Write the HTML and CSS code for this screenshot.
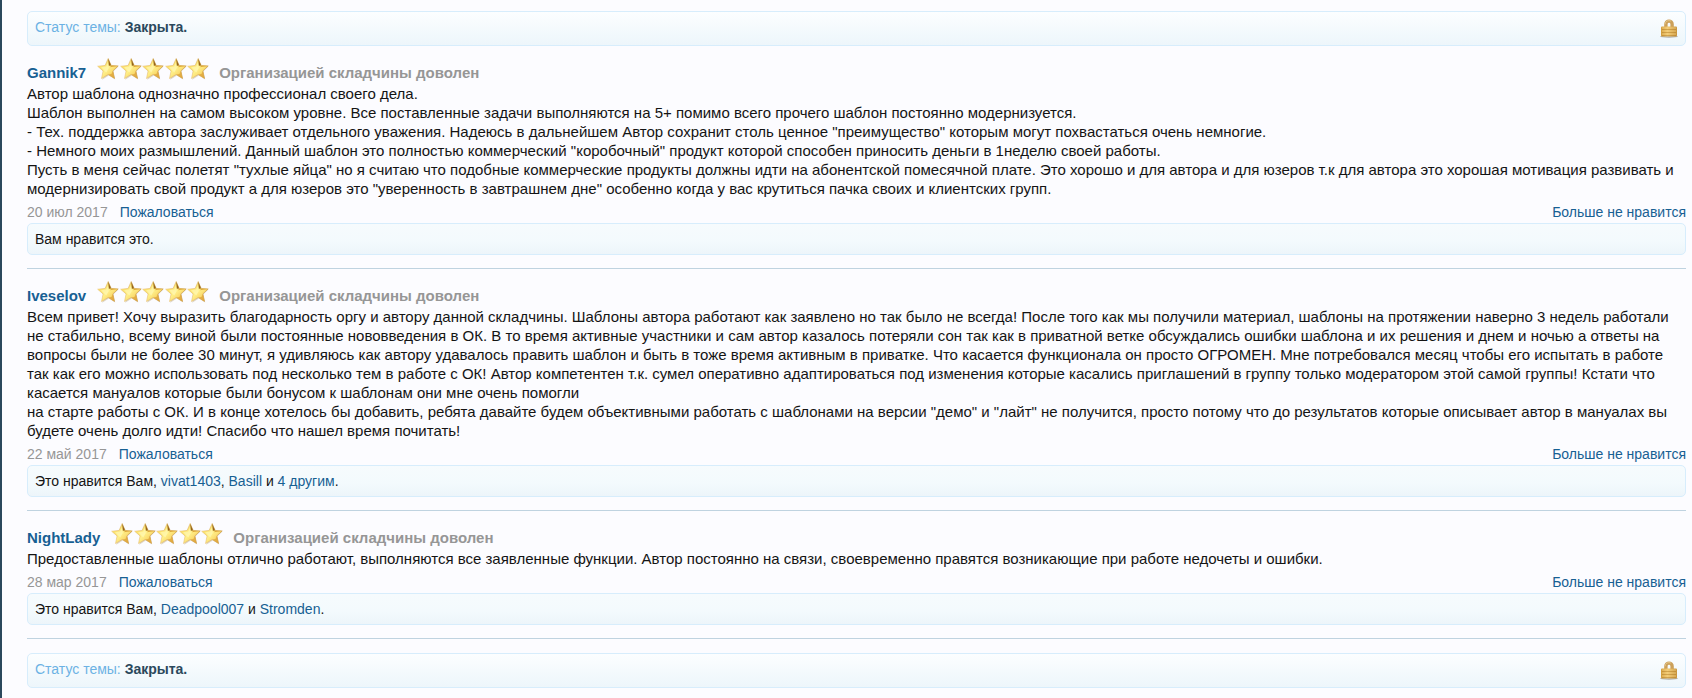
FILE: index.html
```
<!DOCTYPE html>
<html lang="ru">
<head>
<meta charset="utf-8">
<title>Отзывы</title>
<link rel="stylesheet" href="styles.css">
</head>
<body>
<svg class="defs" aria-hidden="true">
  <defs>
    <linearGradient id="gold" x1="0" y1="0" x2="1" y2="1">
      <stop offset="0" stop-color="#f8cf45"/>
      <stop offset="0.5" stop-color="#fff08a"/>
      <stop offset="1" stop-color="#f3b840"/>
    </linearGradient>
    <linearGradient id="edge" x1="0" y1="0" x2="1" y2="0">
      <stop offset="0" stop-color="#f0cb84"/>
      <stop offset="1" stop-color="#c4923f"/>
    </linearGradient>
    <linearGradient id="brass" x1="0" y1="0" x2="1" y2="0">
      <stop offset="0" stop-color="#d19b3a"/>
      <stop offset="0.4" stop-color="#f0c871"/>
      <stop offset="1" stop-color="#c8943c"/>
    </linearGradient>
    <g id="star">
      <path d="M11.5 1l3.2 6.7 6.8.9-5.2 4.9 1.9 7.9-6.4-3.9-6.6 4.2 1.6-7.8L1.2 8.8l7.1-.9z" fill="#b09a74" opacity=".4"/>
      <path d="M11.2 .5l2.9 6.9 7.1.5-5.3 5 1.6 7.5-6.3-3.9-6.7 4 1.6-7.6L.6 8.2l7.5-.8z" fill="url(#gold)" stroke="url(#edge)" stroke-width=".6" stroke-linejoin="round"/>
      <path d="M11.2 .5l2.9 6.9-2.3.4z" fill="#96641c"/>
      <path d="M21.2 7.9l-7.1-.5-1 1.8z" fill="#dfaa3c"/>
      <path d="M15.9 12.9l1.6 7.5-6.3-3.9 3.2-.6z" fill="#dba03a" opacity=".75"/>
      <path d="M4 9.3l5.2-.8L11 4.6l.8 5.4-2.5 4.5z" fill="#fff9b8" opacity=".65"/>
    </g>
    <symbol id="stars" viewBox="0 0 113 22">
      <use href="#star" x="1"/><use href="#star" x="24"/><use href="#star" x="46"/><use href="#star" x="69"/><use href="#star" x="91"/>
    </symbol>
    <symbol id="lock" viewBox="0 0 18 19">
      <ellipse cx="9" cy="17.5" rx="9" ry="1.2" fill="#77706a" opacity=".55"/>
      <path d="M5.9 9V5.2a3.1 3.1 0 0 1 6.2 0V9" fill="none" stroke="#cca05a" stroke-width="3.4"/>
      <path d="M5 5.4a4 4 0 0 1 6-3.3" fill="none" stroke="#e2c487"/>
      <rect x="1" y="7.5" width="16" height="10" rx="1" fill="url(#brass)"/>
      <path d="M2 10.5h14M2 13.5h14M2 16.5h14" stroke="#b8842f" opacity=".5"/>
      <path d="M2 9h14M2 12h14M2 15h14" stroke="#ffdf95" opacity=".45"/>
    </symbol>
  </defs>
</svg>
<main class="page">
  <div class="status">
    <p>Статус темы: <strong>Закрыта.</strong></p>
    <svg class="lock" role="img" aria-label="Закрыта"><use href="#lock"/></svg>
  </div>

  <article class="review">
    <header class="review-head">
      <a class="author" href="#">Gannik7</a>
      <svg class="stars" role="img" aria-label="5 из 5"><use href="#stars"/></svg>
      <h3>Организацией складчины доволен</h3>
    </header>
    <p class="text">Автор шаблона однозначно профессионал своего дела.<br>
Шаблон выполнен на самом высоком уровне. Все поставленные задачи выполняются на 5+ помимо всего прочего шаблон постоянно модернизуется.<br>
- Тех. поддержка автора заслуживает отдельного уважения. Надеюсь в дальнейшем Автор сохранит столь ценное "преимущество" которым могут похвастаться очень немногие.<br>
- Немного моих размышлений. Данный шаблон это полностью коммерческий "коробочный" продукт которой способен приносить деньги в 1неделю своей работы.<br>
Пусть в меня сейчас полетят "тухлые яйца" но я считаю что подобные коммерческие продукты должны идти на абонентской помесячной плате. Это хорошо и для автора и для юзеров т.к для автора это хорошая мотивация развивать и модернизировать свой продукт а для юзеров это "уверенность в завтрашнем дне" особенно когда у вас крутиться пачка своих и клиентских групп.</p>
    <footer class="meta">
      <time datetime="2017-07-20">20 июл 2017</time>
      <a href="#">Пожаловаться</a>
      <a class="unlike" href="#">Больше не нравится</a>
    </footer>
    <p class="likes">Вам нравится это.</p>
  </article>

  <article class="review">
    <header class="review-head">
      <a class="author" href="#">Iveselov</a>
      <svg class="stars" role="img" aria-label="5 из 5"><use href="#stars"/></svg>
      <h3>Организацией складчины доволен</h3>
    </header>
    <p class="text">Всем привет! Хочу выразить благодарность оргу и автору данной складчины. Шаблоны автора работают как заявлено но так было не всегда! После того как мы получили материал, шаблоны на протяжении наверно 3 недель работали не стабильно, всему виной были постоянные нововведения в ОК. В то время активные участники и сам автор казалось потеряли сон так как в приватной ветке обсуждались ошибки шаблона и их решения и днем и ночью а ответы на вопросы были не более 30 минут, я удивляюсь как автору удавалось править шаблон и быть в тоже время активным в приватке. Что касается функционала он просто ОГРОМЕН. Мне потребовался месяц чтобы его испытать в работе так как его можно использовать под несколько тем в работе с ОК! Автор компетентен т.к. сумел оперативно адаптироваться под изменения которые касались приглашений в группу только модератором этой самой группы! Кстати что касается мануалов которые были бонусом к шаблонам они мне очень помогли<br>
на старте работы с ОК. И в конце хотелось бы добавить, ребята давайте будем объективными работать с шаблонами на версии "демо" и "лайт" не получится, просто потому что до результатов которые описывает автор в мануалах вы будете очень долго идти! Спасибо что нашел время почитать!</p>
    <footer class="meta">
      <time datetime="2017-05-22">22 май 2017</time>
      <a href="#">Пожаловаться</a>
      <a class="unlike" href="#">Больше не нравится</a>
    </footer>
    <p class="likes">Это нравится Вам, <a href="#">vivat1403</a>, <a href="#">Basill</a> и <a href="#">4 другим</a>.</p>
  </article>

  <article class="review">
    <header class="review-head">
      <a class="author" href="#">NightLady</a>
      <svg class="stars" role="img" aria-label="5 из 5"><use href="#stars"/></svg>
      <h3>Организацией складчины доволен</h3>
    </header>
    <p class="text">Предоставленные шаблоны отлично работают, выполняются все заявленные функции. Автор постоянно на связи, своевременно правятся возникающие при работе недочеты и ошибки.</p>
    <footer class="meta">
      <time datetime="2017-03-28">28 мар 2017</time>
      <a href="#">Пожаловаться</a>
      <a class="unlike" href="#">Больше не нравится</a>
    </footer>
    <p class="likes">Это нравится Вам, <a href="#">Deadpool007</a> и <a href="#">Stromden</a>.</p>
  </article>

  <div class="status">
    <p>Статус темы: <strong>Закрыта.</strong></p>
    <svg class="lock" role="img" aria-label="Закрыта"><use href="#lock"/></svg>
  </div>
</main>
</body>
</html>
```
FILE: styles.css
```
* { box-sizing: border-box; }
body {
  margin: 0;
  background: #fcfcff;
  color: #141414;
  font: 14px/18px "Liberation Sans", Arial, sans-serif;
}
p, h3 { margin: 0; }
a { color: #176093; text-decoration: none; }
.defs { position: absolute; width: 0; height: 0; }
.page {
  min-height: 100vh;
  padding: 11px 6px 9px 25px;
  border-left: 2px solid #2b485c;
}
.status {
  display: flex;
  justify-content: space-between;
  padding: 7px;
  border: 1px solid #d7edfc;
  border-radius: 5px;
  background: linear-gradient(#fcfeff, #edf6fb);
  color: #6cb2e4;
  line-height: 17px;
}
.status strong { color: #2b485c; }
.lock { width: 18px; height: 19px; }
.review {
  padding: 12px 0 13px;
  border-bottom: 1px solid #bfd3e0;
}
.review + .status { margin-top: 14px; }
.review-head {
  display: flex;
  align-items: flex-end;
  gap: 10px;
  height: 26px;
  font-size: 15px;
  line-height: 22px;
}
.author { font-weight: bold; }
.stars { width: 113px; height: 22px; margin-bottom: 4px; }
h3 { color: #969696; font-size: 15px; }
.text { font-size: 15px; line-height: 19px; }
.meta {
  display: flex;
  gap: 12px;
  padding: 5px 0 2px;
}
.meta time { color: #969696; }
.unlike { margin-left: auto; }
.likes {
  padding: 7px 7px 6px;
  border: 1px solid #d7edfc;
  border-radius: 5px;
  background: linear-gradient(#f6fbfd, #f3fafd 60%, #edf5fa);
  line-height: 17px;
}
```
